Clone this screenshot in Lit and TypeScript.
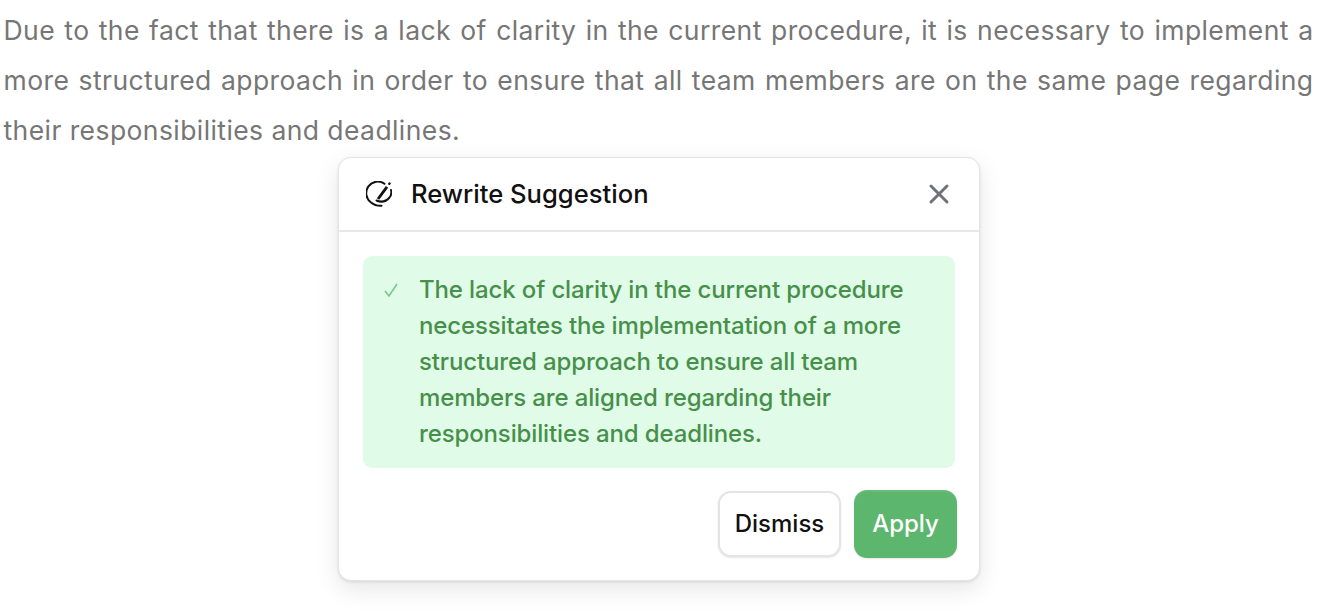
import { LitElement, html, css } from "lit";
import { customElement } from "lit/decorators.js";

@customElement("app-root")
export class AppRoot extends LitElement {
  static styles = css`
    :host { display: block; width: 1322px; height: 612px; overflow: hidden; background: #fff; font-family: "Inter", sans-serif; }
    .para { margin: 0; padding: 4.6px 8.5px 1.4px 3.5px; font-family: "Inter", sans-serif; font-size: 26.5px; letter-spacing: 0.42px; line-height: 50px; color: #767676; text-align: justify; }
    .card { box-sizing: border-box; width: 642px; height: 424px; margin: 1px 0 0 338px; background: #fff; border: 1.5px solid #e5e5e5; border-radius: 13px; box-shadow: 0 8px 24px rgba(0,0,0,.1), 0 1px 3px rgba(0,0,0,.1); display: flex; flex-direction: column; }
    .head { height: 74px; flex: none; box-sizing: border-box; display: flex; align-items: center; padding: 0 28px 0 27px; border-bottom: 2px solid #e8e8e8; }
    .head svg.logo { width: 26px; height: 26px; margin-right: 19px; }
    .title { flex: 1; font-size: 25.6px; font-weight: 450; color: #111; margin-bottom: 1px; }
    .close { width: 24px; height: 24px; }
    .body { padding: 24px 24px 0; }
    .sug { display: flex; height: 212px; box-sizing: border-box; background: #e1fbe9; border-radius: 9px; padding: 16px 20px 0 20px; color: #47904a; font-size: 24px; font-weight: 450; letter-spacing: -0.13px; line-height: 36px; }
    .check { width: 16px; height: 16px; margin: 10px 20px 0 0; flex: none; }
    .foot { display: flex; justify-content: flex-end; align-items: center; gap: 13px; padding: 22px 22px 0 0; }
    button { font-family: inherit; font-size: 24px; font-weight: 500; border-radius: 13px; box-sizing: border-box; padding: 0 0 1px; }
    .dismiss { width: 123px; height: 66px; background: #fff; color: #111; border: 2px solid #e4e4e4; box-shadow: 0 1px 2px rgba(0,0,0,.1); }
    .apply { width: 103px; height: 68px; background: #5cb66d; color: #fff; border: 0; box-shadow: 0 1px 2px rgba(0,0,0,.1), inset 0 2px 0 rgba(255,255,255,.07); }
  `;
  render() {
    return html`
      <p class="para">Due to the fact that there is a lack of clarity in the current procedure, it is necessary to implement a more structured approach in order to ensure that all team members are on the same page regarding their responsibilities and deadlines.</p>
      <div class="card">
        <div class="head">
          <svg class="logo" viewBox="0 0 26 26" fill="none" stroke="#111" stroke-width="2" stroke-linecap="round">
            <path d="M18.500 2.800A11.500 11.500 0 0 0 5 21.500 C8 24 12 25 15.500 24.800" />
            <path d="M10.500 19.500C15 21.500 20 20.500 23.500 16.500 25.500 14 25.800 11.500 25 9" />
            <path d="M12 18L21 5.800" stroke-width="2.800" stroke-linecap="butt" />
            <path d="M23.300 2.800l.3-.4" stroke-width="2.400" />
          </svg>
          <span class="title">Rewrite Suggestion</span>
          <svg class="close" viewBox="0 0 24 24" fill="none" stroke="#6f7178" stroke-width="3" stroke-linecap="round"><path d="M4 4l16 16M20 4L4 20"/></svg>
        </div>
        <div class="body">
          <div class="sug">
            <svg class="check" viewBox="0 0 16 16" fill="none" stroke="#78c97f" stroke-width="1.6"><path d="M2 9l4 5 8-12"/></svg>
            <span>The lack of clarity in the current procedure necessitates the implementation of a more structured approach to ensure all team members are aligned regarding their responsibilities and deadlines.</span>
          </div>
        </div>
        <div class="foot">
          <button class="dismiss">Dismiss</button>
          <button class="apply">Apply</button>
        </div>
      </div>
    `;
  }
}
